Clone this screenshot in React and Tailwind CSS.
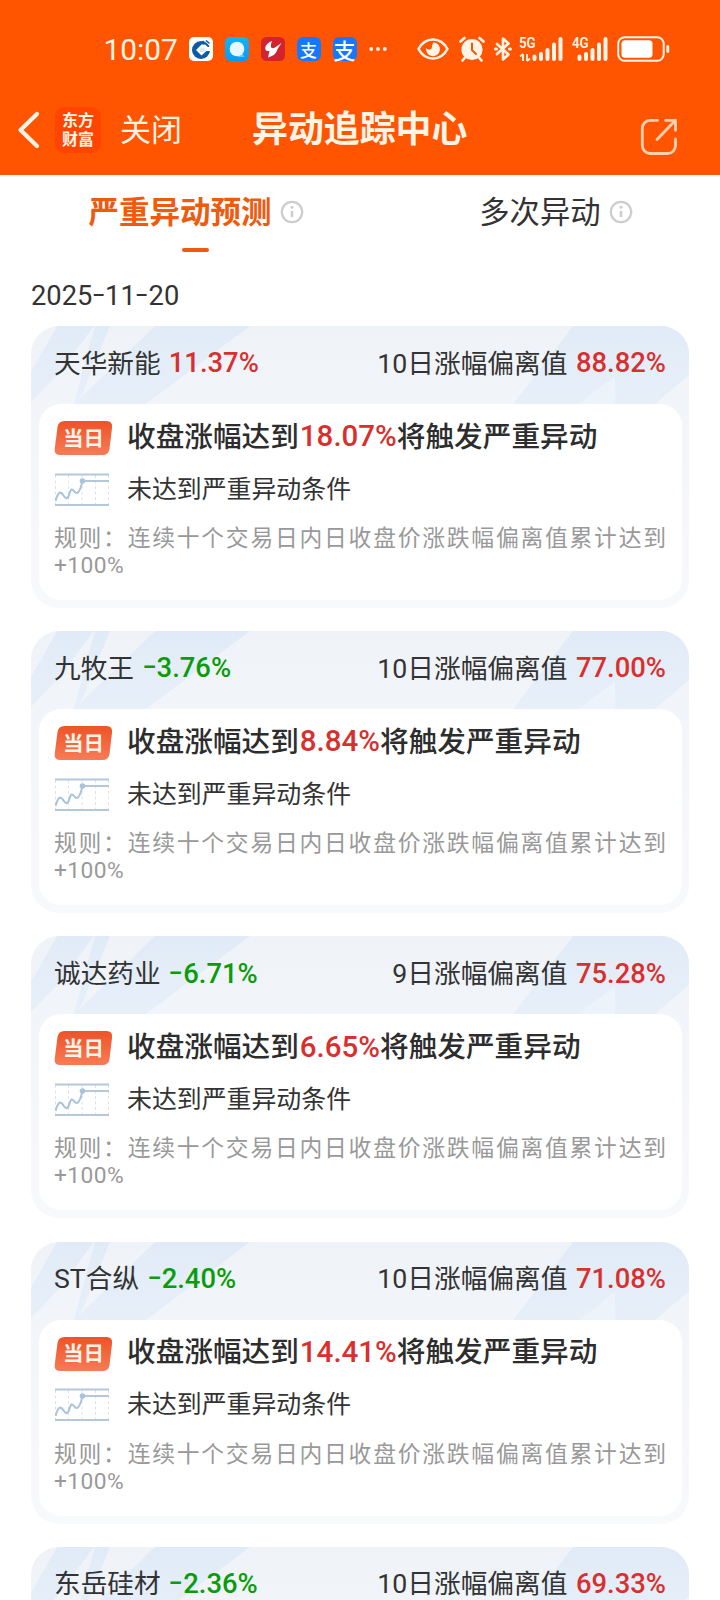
import React from 'react';

const stocks = [
  { name: '天华新能', change: '11.37%', up: true, days: 10, deviation: '88.82%', trigger: '18.07%' },
  { name: '九牧王', change: '-3.76%', up: false, days: 10, deviation: '77.00%', trigger: '8.84%' },
  { name: '诚达药业', change: '-6.71%', up: false, days: 9, deviation: '75.28%', trigger: '6.65%' },
  { name: 'ST合纵', change: '-2.40%', up: false, days: 10, deviation: '71.08%', trigger: '14.41%' },
  { name: '东岳硅材', change: '-2.36%', up: false, days: 10, deviation: '69.33%', trigger: '12.75%' },
];

// Roboto's hyphen is short and low, so it is stretched and lifted to mid-digit
function Digits({ value }) {
  return value.split('').map((char, i) =>
    char === '-' ? (
      <span key={i} className="inline-block scale-x-150 -translate-y-[2px] mx-[2.600px]">-</span>
    ) : (
      char
    )
  );
}

function AppIcons() {
  return (
    <div className="flex items-center gap-[12px] ml-[10px] font-['Noto_Sans_CJK_SC',sans-serif]">
      <svg className="w-[24px] h-[24px]" viewBox="0 0 24 24">
        <rect width="24" height="24" rx="5" fill="#fff" />
        <circle cx="12" cy="13" r="9" fill="#0b5ba5" />
        <path d="M12.500 7.500h4l2 2.200H22V14h-4.500l-5 4.500L7 13z" fill="#fff" />
        <path d="M12.500 10.500h3v4.500h-5v-3z" fill="#0b5ba5" opacity=".15" />
        <path d="M13.500 4l6.500 5.500M17 3.500l3.500 3" stroke="#0b5ba5" strokeWidth="1.500" />
      </svg>
      <svg className="w-[24px] h-[24px]" viewBox="0 0 24 24">
        <defs>
          <linearGradient id="chat" x1="0" y1="0" x2="0" y2="1">
            <stop offset="0" stopColor="#12b3f5" />
            <stop offset="1" stopColor="#0c98f2" />
          </linearGradient>
        </defs>
        <rect width="24" height="24" rx="5.500" fill="url(#chat)" />
        <path d="M16 14l3.500 6h-7z" fill="#4fd2ff" />
        <circle cx="12" cy="12" r="7.300" fill="#e9f8ff" />
      </svg>
      <svg className="w-[24px] h-[24px]" viewBox="0 0 24 24">
        <rect width="24" height="24" rx="5.500" fill="#d3232f" />
        <path d="M11 4C6 6 3.500 9.500 4.500 12.500c.7 1.700 2.500 1.800 4 1.500L7 20.500c6-1.500 8.500-4.500 9.500-8.500l4-6-6.500 4.500c-1.500 1-3.500 1-4-.500-.4-1.800.3-4 1-6z" fill="#fff" />
      </svg>
      <div className="w-[24px] h-[24px] rounded-[6px] bg-[#1677ff] flex items-center justify-center text-white text-[17px] leading-none font-medium">支</div>
      <div className="w-[24px] h-[24px] rounded-[6px] bg-[#1677ff] flex items-center justify-center text-white text-[22px] leading-none font-medium">支</div>
    </div>
  );
}

function SystemIcons() {
  return (
    <div className="flex items-center text-[#fff4e6]">
      <svg className="w-[32px] h-[24px]" viewBox="0 0 32 24" fill="none">
        <path d="M1.500 12C5 5.500 10 2.500 16 2.500S27 5.500 30.500 12C27 18.500 22 21.500 16 21.500S5 18.500 1.500 12z" stroke="currentColor" strokeWidth="2.600" strokeLinejoin="round" />
        <path d="M16.500 5.200A7 7 0 1 1 9.200 10.500c1 2.500 4.300 2.700 5.400.7.800-1.600.2-4.200 1.900-6z" fill="currentColor" />
      </svg>
      <svg className="w-[26px] h-[26px] ml-[10px]" viewBox="0 0 26 26" fill="none">
        <circle cx="13" cy="13.500" r="10.600" fill="currentColor" />
        <path d="M1.500 5.500l4-3.500M24.500 5.500l-4-3.500M6 21.500l-2.500 3M20 21.500l2.500 3" stroke="currentColor" strokeWidth="2.600" strokeLinecap="round" />
        <path d="M13 7.500v6.500l4 4" stroke="#ff5500" strokeWidth="2" strokeLinecap="round" />
      </svg>
      <svg className="w-[18px] h-[26px] ml-[9px]" viewBox="0 0 18 26" fill="none">
        <path d="M3 8l11.500 10.500-5.500 5V2.500l5.500 5L3 18" stroke="currentColor" strokeWidth="2.600" strokeLinejoin="round" strokeLinecap="round" />
        <path d="M1.500 13h1M15.500 13h1" stroke="currentColor" strokeWidth="3" strokeLinecap="round" />
      </svg>
      <div className="relative ml-[7.500px]">
        <svg className="w-[44px] h-[26px]" viewBox="0 0 44 26" fill="none" stroke="currentColor">
          <path d="M15.500 20.500v2.500M22 18v5M28.500 14v9M35 8.500v14.500M41.500 3v20" strokeWidth="4" strokeLinecap="round" />
          <path d="M4 18v7M4 18l-3 2.500M8 18v7M8 25l3-2.500" strokeWidth="1.800" />
        </svg>
        <span className="absolute left-0 -top-[1px] text-[15.500px] leading-[17px] font-semibold scale-x-[.86] origin-left">5G</span>
      </div>
      <div className="relative ml-[9px]">
        <svg className="w-[36px] h-[26px]" viewBox="0 0 36 26" fill="none" stroke="currentColor">
          <path d="M7.500 20.500v2.500M14 18v5M20.500 14v9M27 8.500v14.500M33.500 3v20" strokeWidth="4" strokeLinecap="round" />
        </svg>
        <span className="absolute left-0 -top-[1px] text-[15.500px] leading-[17px] font-semibold scale-x-[.86] origin-left">4G</span>
      </div>
      <svg className="w-[53px] h-[26px] ml-[8.500px]" viewBox="0 0 53 26" fill="none">
        <rect x="1.200" y="1.200" width="45.500" height="23.600" rx="6.500" stroke="currentColor" strokeWidth="2" />
        <rect x="4.500" y="4.200" width="31" height="17.600" rx="3.500" fill="#fff" />
        <path d="M50.800 10.500v5" stroke="currentColor" strokeWidth="2.800" strokeLinecap="round" />
      </svg>
    </div>
  );
}

function Header() {
  return (
    <header className="h-[175px] bg-[#ff5500] text-[#fff4e6]">
      <div className="h-[86px] pt-[12px] pl-[103.500px] flex items-center">
        <span className="w-[75px] pt-[2px] text-[29.800px] leading-none">10:07</span>
        <AppIcons />
        <svg className="w-[18px] h-[6px] ml-[12.500px] mr-[29.500px]" viewBox="0 0 18 6" fill="#fff4e6">
          <circle cx="2.200" cy="3" r="1.900" />
          <circle cx="9" cy="3" r="1.900" />
          <circle cx="15.800" cy="3" r="1.900" />
        </svg>
        <SystemIcons />
      </div>
      <div className="h-[89px] pl-[17px] pr-[42px] flex items-center">
        <svg className="w-[23px] h-[38px] -mt-[2px]" viewBox="0 0 23 38" fill="none">
          <path d="M20 3L3.500 19 20 35" stroke="currentColor" strokeWidth="4.200" strokeLinecap="round" strokeLinejoin="round" />
        </svg>
        <div className="w-[46px] h-[46px] ml-[15px] -mt-[1px] rounded-[9px] bg-[#ff4500] flex flex-col items-center justify-center text-[16px] leading-[19px] font-bold">
          <span>东方</span>
          <span>财富</span>
        </div>
        <span className="ml-[19px] text-[31px] leading-none">关闭</span>
        <h1 className="ml-[70px] text-[35.900px] leading-none font-bold">异动追踪中心</h1>
        <svg className="w-[38px] h-[38px] ml-auto mt-[13px]" viewBox="0 0 38 38" fill="none" stroke="#ffd0ae" strokeWidth="2.800" strokeLinecap="round" strokeLinejoin="round">
          <path d="M17.500 2.300H10A8 8 0 0 0 2.300 10v17.500A8 8 0 0 0 10 35.500h17.500a8 8 0 0 0 8-8V21" />
          <path d="M25.500 2.300h10v10M35.500 2.300L17 21.500" />
        </svg>
      </div>
    </header>
  );
}

function InfoIcon() {
  return (
    <svg className="w-[24px] h-[24px]" viewBox="0 0 24 24" fill="none">
      <circle cx="12" cy="12" r="10.200" stroke="#cdcdcd" strokeWidth="2.200" />
      <circle cx="12" cy="7.300" r="1.500" fill="#cdcdcd" />
      <path d="M12 11v6" stroke="#cdcdcd" strokeWidth="2.600" />
    </svg>
  );
}

function Tabs() {
  return (
    <nav className="h-[91px] pt-[18px] pl-[88.500px] pr-[87.500px] flex justify-between items-start">
      <button className="flex flex-col items-center">
        <span className="h-[38px] flex items-center gap-[8.500px] text-[30.500px] leading-none font-bold text-[#ee5a0e]">
          <span className="pt-[2px]">严重异动预测</span>
          <InfoIcon />
        </span>
        <span className="mt-[17px] mr-[2px] w-[27px] h-[4px] rounded-full bg-[#ee5a0e]" />
      </button>
      <button className="h-[38px] flex items-center gap-[8px] text-[30.300px] leading-none text-[#333]">
        <span className="pt-[2px]">多次异动</span>
        <InfoIcon />
      </button>
    </nav>
  );
}

function CardBeams() {
  return (
    <svg className="absolute inset-0 w-full h-[120px]" viewBox="0 0 658 120" preserveAspectRatio="none">
      <defs>
        <linearGradient id="beam" gradientUnits="userSpaceOnUse" x1="0" y1="0" x2="0" y2="120">
          <stop offset="0" stopColor="#e1ebf7" />
          <stop offset=".65" stopColor="#e7f0f9" />
          <stop offset="1" stopColor="#eff3f8" stopOpacity="0" />
        </linearGradient>
      </defs>
      <path d="M26 0h37L28 47 0 76V46z" fill="url(#beam)" />
      <path d="M64 0h15L52 66l-7 12h-2l13-50z" fill="url(#beam)" />
      <path d="M124 0h95L115 78 60 120H20L43 78z" fill="url(#beam)" />
      <path d="M542 0h116v49l-34 29-48 42H450z" fill="url(#beam)" />
      <path d="M584 50v50h-64z" fill="#edf3fa" />
    </svg>
  );
}

function TodayBadge() {
  return (
    <div className="relative w-[59px] h-[34px] pt-[2px] flex items-center justify-center">
      <svg className="absolute inset-0 w-[59px] h-[34px]" viewBox="0 0 58 34">
        <defs>
          <linearGradient id="badge" x1="0" y1="0" x2="0" y2="1">
            <stop offset="0" stopColor="#ee5328" />
            <stop offset="1" stopColor="#f77b56" />
          </linearGradient>
        </defs>
        <path d="M10 0h42q6 0 5.600 6l-2.600 22q-1 6-7 6H6q-6.500 0-5.800-6L3 6q1-6 7-6z" fill="url(#badge)" />
      </svg>
      <span className="relative text-[20.500px] leading-none font-bold text-[#fff3ea]">当日</span>
    </div>
  );
}

function TrendIcon() {
  return (
    <svg className="w-[54px] h-[34px] ml-[1px] -mt-[1px]" viewBox="0 0 54 34" fill="none">
      <path d="M.5 2v30M13.500 2v30M27 2v30M40.500 2v30M53.500 2v30" stroke="#dbe4ec" strokeWidth="1" strokeDasharray="3 2.500" />
      <path d="M0 1.500h54M0 32h54" stroke="#b5c8db" strokeWidth="2" />
      <path d="M.5 28C3 19.500 5 18.500 7 20.500s2.500 5.500 5 4.500 2.500-7.500 4.500-8.500 3 4 5.500 3.500 4-5.500 5.500-12" stroke="#a9c3da" strokeWidth="2" />
      <path d="M27.500 8H54" stroke="#b5c8db" strokeWidth="1.800" />
      <circle cx="27.500" cy="8" r="2.800" fill="#a9c3da" />
    </svg>
  );
}

function StockCard({ stock }) {
  return (
    <div className="relative shrink-0 h-[282px] rounded-[28px] overflow-hidden bg-gradient-to-b from-[#eff3f8] to-[#f8f9fb] px-[7.500px] pb-[8px] flex flex-col">
      <CardBeams />
      <div className="relative h-[78px] pb-[2px] px-[15.500px] flex items-center justify-between text-[26.700px] leading-none text-[#333]">
        <div className="flex items-center">
          <span>{stock.name}</span>
          <span className={`ml-[8px] text-[27.400px] font-medium ${stock.up ? 'text-[#d8302f]' : 'text-[#0a9c0a]'}`}>
            <Digits value={stock.change} />
          </span>
        </div>
        <div className="flex items-center">
          <span>{stock.days}日涨幅偏离值</span>
          <span className="ml-[8.500px] text-[27.400px] font-medium text-[#d8302f]">{stock.deviation}</span>
        </div>
      </div>
      <div className="relative flex-1 rounded-[22px] bg-white px-[15.500px] pt-[13px]">
        <div className="h-[42px] flex items-center">
          <div className="w-[73px]">
            <TodayBadge />
          </div>
          <p className="pb-[2px] flex items-center text-[28.650px] leading-none font-medium text-[#2d2d2d] whitespace-nowrap">
            <span>收盘涨幅达到</span>
            <span className="ml-[1px] text-[29.500px] text-[#d8302f]">{stock.trigger}</span>
            <span>将触发严重异动</span>
          </p>
        </div>
        <div className="h-[62px] flex items-center">
          <div className="w-[73px]">
            <TrendIcon />
          </div>
          <p className="text-[24.900px] leading-none text-[#333]">未达到严重异动条件</p>
        </div>
        <p className="mt-[4px] text-[22.800px] leading-[27px] text-justify text-[#999]">
          规则：连续十个交易日内日收盘价涨跌幅偏离值累计达到<span className="tracking-[.4px]">+100%</span>
        </p>
      </div>
    </div>
  );
}

function App() {
  return (
    <div lang="zh-CN" className="w-[720px] h-[1600px] overflow-hidden bg-white font-['Roboto','Noto_Sans_CJK_SC',sans-serif]">
      <Header />
      <Tabs />
      <div className="h-[60px] pl-[31px] flex items-center text-[27.300px] text-[#333]">
        <span>
          <Digits value="2025-11-20" />
        </span>
      </div>
      <div className="px-[31px] flex flex-col gap-[23.200px]">
        {stocks.map((stock) => (
          <StockCard key={stock.name} stock={stock} />
        ))}
      </div>
    </div>
  );
}

export default App;
